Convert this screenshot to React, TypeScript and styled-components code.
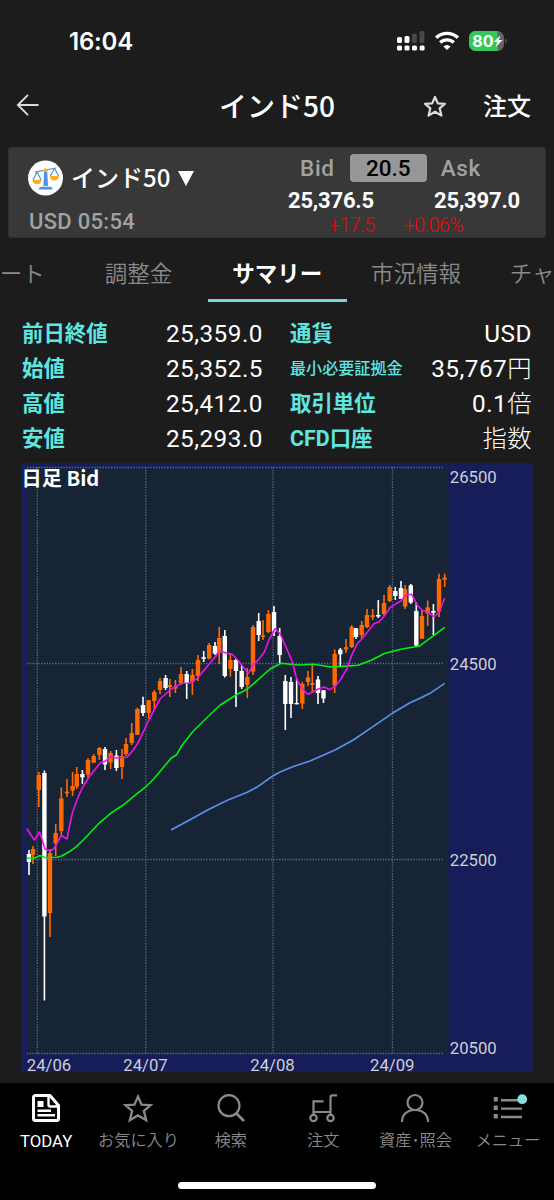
import React from 'react';
import styled, {createGlobalStyle} from 'styled-components';

const Colors = {
    Page: '#1c1c1c',
    Panel: '#383838',
    Grey: '#a2a2a2',
    Dim: '#8a8a8a',
    Cyan: '#5ee6e0',
    Teal: '#80d3d5',
    Red: '#f00505',
    Navy: '#161d58',
    Plot: '#172436',
    Grid: '#5c6688',
    Orange: '#ff6a00',
};

const GlobalStyle = createGlobalStyle`
    * {
        box-sizing: border-box;
    }

    body {
        margin: 0;
        background: ${Colors.Page};
        color: #fff;
        font-family: Roboto, 'Noto Sans CJK JP', sans-serif;
    }
`;

const Screen = styled.div`
    width: 554px;
    height: 1200px;
    overflow: hidden;
    display: flex;
    flex-direction: column;
    background: ${Colors.Page};
    white-space: nowrap;
`;

const StatusBar = styled.div`
    height: 82px;
    padding: 0 46px 0 69px;
    display: flex;
    align-items: center;
    justify-content: space-between;
`;

const Clock = styled.div`
    font-family: Inter, sans-serif;
    font-size: 24px;
    font-weight: 600;
    letter-spacing: -0.2px;
`;

const StatusIcons = styled.svg`
    width: 111px;
    height: 20px;
    display: block;
`;

const Header = styled.header`
    height: 65px;
    padding: 0 23px 19px 17px;
    display: grid;
    grid-template-columns: 1fr auto 1fr;
    align-items: center;
`;

const Title = styled.h1`
    margin: 0;
    font: 500 28px/40px 'Noto Sans CJK JP', sans-serif;
    position: relative;
    left: 3px;
`;

const HeaderActions = styled.div`
    display: flex;
    align-items: center;
    justify-content: flex-end;
    gap: 37px;

    svg {
        margin-top: 2px;
    }
`;

const OrderButton = styled.button`
    padding: 0;
    border: none;
    background: none;
    color: #fff;
    font: 500 24px/30px 'Noto Sans CJK JP', sans-serif;
`;

const Icon = styled.svg`
    display: block;
    fill: none;
    stroke: currentColor;
    overflow: visible;
`;

const Quote = styled.section`
    height: 91px;
    margin: 0 8px;
    display: flex;
    background: ${Colors.Panel};
    border: 1px solid #303030;
    border-radius: 3px;
`;

const Instrument = styled.div`
    width: 271px;
    padding: 12px 0 0 19px;
`;

const InstrumentName = styled.div`
    height: 36px;
    display: flex;
    align-items: center;
    font: 500 24px/34px 'Noto Sans CJK JP', sans-serif;

    span {
        margin: -2px 8px 0 8px;
    }
`;

const Session = styled.div`
    margin-top: 12px;
    padding-left: 1px;
    color: ${Colors.Grey};
    font-size: 22px;
    font-weight: 500;
    line-height: 28px;
    letter-spacing: 0.3px;
`;

const Prices = styled.div`
    flex: 1;
    padding: 6px 25px 0 8px;
`;

const PriceHead = styled.div`
    display: flex;
    align-items: center;
    padding-left: 12px;
    color: ${Colors.Grey};
    font-size: 22.5px;
    font-weight: 500;
    line-height: 28px;
    letter-spacing: 0.7px;
`;

const Spread = styled.div`
    width: 77px;
    height: 28px;
    margin: 0 14px 0 15px;
    border-radius: 4px;
    background: #979797;
    color: #000;
    text-align: center;
    letter-spacing: 0;
`;

const PriceRow = styled.div`
    display: flex;
    justify-content: space-between;
    margin-top: 5px;
    font-size: 22px;
    font-weight: 700;
    line-height: 28px;
    letter-spacing: -0.2px;
`;

const ChangeRow = styled.div`
    display: flex;
    gap: 29px;
    padding-left: 41px;
    margin-top: -1px;
    color: ${Colors.Red};
    font-size: 19.5px;
    font-weight: 300;
    line-height: 23px;
    letter-spacing: -0.5px;
`;

const Tabs = styled.nav`
    display: flex;
    height: 64px;
    margin-left: -69.5px;
`;

const Tab = styled.div<{$active?: boolean}>`
    flex: 0 0 138.7px;
    height: 64px;
    padding-top: 18px;
    border-bottom: 3px solid ${({$active}) => ($active ? Colors.Teal : 'transparent')};
    color: ${({$active}) => ($active ? '#fff' : Colors.Dim)};
    font: ${({$active}) => ($active ? 700 : 350)} 22.5px/33px 'Noto Sans CJK JP', sans-serif;
    text-align: center;
`;

const Summary = styled.dl`
    margin: 13px 22px 0 22px;
    display: grid;
    grid-template-columns: 241px 242px;
    column-gap: 27px;
    grid-auto-rows: 35px;
`;

const Item = styled.div`
    display: flex;
    align-items: center;
    justify-content: space-between;
`;

const Label = styled.dt<{$small?: boolean}>`
    color: ${Colors.Cyan};
    font-family: Roboto, 'Noto Sans CJK JP', sans-serif;
    font-size: ${({$small}) => ($small ? 16.1 : 21.4)}px;
    font-weight: ${({$small}) => ($small ? 500 : 700)};
    line-height: 37px;
    height: 35px;
`;

const Value = styled.dd`
    margin: 0;
    height: 35px;
    font: 400 24.3px/37px Roboto, sans-serif;
    letter-spacing: 0.5px;
`;

const Unit = styled.span`
    font-family: 'Noto Sans CJK JP', sans-serif;
    font-weight: 300;
    line-height: 0;
`;

const ChartSvg = styled.svg`
    flex: none;
    display: block;
    width: 512px;
    height: 609px;
    margin: 8px 0 0 21px;
`;

const TabBar = styled.footer`
    flex: 1;
    margin-top: 11px;
    display: flex;
    flex-direction: column;
    align-items: center;
    justify-content: space-between;
    background: #000;
    padding-bottom: 11px;
`;

const TabBarItems = styled.div`
    width: 100%;
    display: grid;
    grid-template-columns: repeat(6, 1fr);
`;

const TabBarItem = styled.div<{$active?: boolean}>`
    padding-top: 11px;
    display: flex;
    flex-direction: column;
    align-items: center;
    color: ${({$active}) => ($active ? '#fff' : '#8a8a8a')};
    font-family: Roboto, 'Noto Sans CJK JP', sans-serif;
    font-size: ${({$active}) => ($active ? 16.8 : 16.2)}px;
    font-weight: ${({$active}) => ($active ? 400 : 350)};
    line-height: 24px;

    svg {
        margin-bottom: 7px;
    }
`;

const HomeIndicator = styled.div`
    width: 198px;
    height: 7px;
    border-radius: 4px;
    background: #fff;
`;

const summary = [
    {label: '前日終値', value: '25,359.0'},
    {label: '通貨', value: 'USD'},
    {label: '始値', value: '25,352.5'},
    {label: '最小必要証拠金', value: '35,767', unit: '円', small: true},
    {label: '高値', value: '25,412.0'},
    {label: '取引単位', value: '0.1', unit: '倍'},
    {label: '安値', value: '25,293.0'},
    {label: 'CFD口座', value: '', unit: '指数'},
];

// x, high, body top, body bottom, low, rising
const candles = [
    [29, 850, 854, 862, 875, 0], [33, 846, 849, 855, 864, 1], [38.8, 772, 775, 790, 807, 1],
    [44.4, 770.5, 773, 916.5, 1000.5, 0], [50, 849, 853, 913, 937, 1], [55.7, 824, 833, 843.5, 856, 1],
    [61.3, 787.5, 798.5, 831, 835, 1], [67, 779, 791.7, 793.3, 797, 1], [72.6, 772, 786, 790.5, 796, 1],
    [76.8, 767, 774, 786.5, 789, 1], [82.4, 770, 774, 777.3, 784, 0], [88, 758, 760, 774.5, 779, 1],
    [93.7, 754, 756, 762.7, 762.7, 1], [99.4, 747, 748, 755, 760, 1], [105, 747, 749, 764.5, 770, 0],
    [110.6, 751, 753, 762.5, 769, 1], [116.4, 750, 755.5, 768, 771, 0], [122, 749, 756, 767, 779, 1],
    [126, 738, 744, 754, 756, 1], [131.7, 723, 733, 743, 745, 1], [137.4, 707.7, 709, 734.8, 735, 1],
    [143, 696.7, 705, 713, 716, 0], [148.7, 700, 700.3, 713, 719, 1], [154.3, 690, 692, 701, 710, 1],
    [160, 678, 681, 690, 694, 1], [165.6, 675, 678, 688, 690, 0], [169.8, 679, 685, 687, 697, 1],
    [175.4, 680, 686.5, 688.5, 693, 1], [181, 667, 674, 683, 685, 1], [186.7, 671, 674, 683, 699, 0],
    [192.4, 669, 675, 682, 695, 1], [198, 655, 660, 676, 681, 1], [203.7, 651, 657.2, 658.8, 662, 0],
    [209.2, 643, 645, 658.5, 659.5, 1], [215, 642, 646, 653.5, 655, 0], [219.2, 627, 638, 653, 664, 1],
    [224.8, 630, 636, 676, 677.5, 0], [230.4, 653, 660, 669, 676.5, 1], [236, 659, 660, 671, 707, 0],
    [241.7, 665, 671, 687, 689, 0], [247.3, 668, 677, 685, 698, 1], [253, 625, 627, 671.5, 675, 1],
    [258.7, 613, 621, 635, 641, 0], [263, 620, 635.5, 637, 640, 1], [268.4, 610, 614, 632, 633, 1],
    [274, 606, 612, 631.5, 636, 0], [279.7, 628, 636, 655, 663, 0], [285.3, 675, 681, 704, 730, 0],
    [291, 677, 682, 704, 718, 0], [296.7, 679, 703, 704.3, 704.3, 0], [302.3, 682, 684, 703.5, 709, 1],
    [308, 671, 677.3, 682, 686, 1], [312.3, 665, 683, 684.8, 692, 1], [318, 676, 679.5, 693, 704, 0],
    [323.5, 690, 690.3, 698.5, 703, 0], [334.7, 649.5, 654, 685.5, 693, 1], [340.3, 648, 649.7, 654.3, 667, 0],
    [346, 639, 647.2, 649.5, 653, 1], [351.7, 625, 627, 647, 648, 1], [356, 628, 628.3, 637, 639, 0],
    [361.7, 621, 625, 635, 638, 1], [367, 609, 615, 627, 628, 1], [372.7, 609, 615.3, 617, 620, 1],
    [378.3, 600, 615, 616.5, 618, 0], [384, 595, 603, 614, 616, 1], [389.7, 585, 587, 601, 602, 1],
    [395.3, 587, 591, 596, 600, 0], [401, 581, 588, 599, 599, 0], [405.1, 585, 589, 606.5, 609, 1],
    [410.8, 584, 585.3, 602.5, 604, 0], [416.3, 602, 611, 645.5, 646.5, 0], [422, 610, 616, 638.7, 639, 1],
    [427.7, 600.5, 607.3, 613.5, 626, 1], [433.4, 604, 611, 612.7, 635, 0], [439, 573.7, 579, 611.5, 617, 1],
    [444.7, 573.7, 577.7, 579.7, 587, 1],
];

const shortAverage = '26.7,828.5 34.3,840 39.7,832 45,849 50,851 53.7,849 61.3,835.5 67,839 69.5,826 72.7,811.7 78.3,796.7 83.3,786 89,777.3 100.3,762.7 105,761.3 110.7,756.7 116.7,758 127,757.2 133.3,750 138.3,742.3 149.3,719 160,699 171.3,689 181.7,683.3 190,683 197.3,678.3 220.3,650.7 226.7,653.3 232,654 238.3,660.7 248.3,673.3 254,664 259,659 264.3,652.3 269.3,639.3 275,628.7 280.3,634 292.3,661.7 297,680 302.7,689.3 308,694.3 313.3,691.7 318.3,689 324.3,687 329.7,689.7 335,686.3 340.3,680 346.7,669 351.7,655.3 357,644 363.3,637.3 374,623.7 379.3,621.7 384.3,616 390,607.7 396.7,603.3 401,601 406,595 411.7,594.3 417.3,605.3 422.3,610.3 427.7,612 434,616.7 439,612.3 444.7,598.3';
const middleAverage = '26.7,858.3 34,858.3 40,855.5 45,857.5 57,857.3 61.7,856 70,851.3 76,846.8 83.3,840 100,822.3 111.7,812.7 123.3,805 136.7,793.8 146,786.7 154.3,778.3 171,758.3 176.7,754.7 181.7,745.7 192.7,731.7 205,719.5 220.3,705 236,695 247.3,689 254,683.3 270,669 281,663.3 298.3,665 313.3,664.3 330,666.7 342,666.4 358.3,665.3 371.7,660 385,653.3 401.7,649 419,646.3 444.7,627.3';
const longAverage = '171,830 190,819.7 209,809.3 228,800 247.3,792.3 256.7,787.3 272.7,776 280,772 294,766.3 310,761 335,750 353.3,740 370,728.7 392.3,713.3 410,702.7 420,698.3 430,693.3 444.7,683.3';

const months = [
    {x: 37.3, label: '24/06', labelX: 26.8},
    {x: 145.8, label: '24/07', labelX: 123.3},
    {x: 273, label: '24/08', labelX: 250.3},
    {x: 392.5, label: '24/09', labelX: 370},
];

const levels = [
    {y: 467.5, label: '26500', labelY: 483},
    {y: 663.5, label: '24500', labelY: 669.5},
    {y: 859.5, label: '22500', labelY: 865.5},
    {y: 1053.5, label: '20500', labelY: 1054},
];

const Chart = () => (
    <ChartSvg viewBox="21 463 512 609">
        <rect x="21" y="463" width="512" height="609" fill={Colors.Navy} />
        <rect x="27" y="467" width="421.5" height="587" fill={Colors.Plot} />
        <g stroke={Colors.Grid} strokeWidth="1.3" strokeDasharray="1.4 1.4">
            {months.map(m => <line key={m.label} x1={m.x} x2={m.x} y1="467" y2="1054" />)}
            {levels.map(l => <line key={l.label} x1="27" x2="443" y1={l.y} y2={l.y} />)}
        </g>
        {candles.map(([x, high, top, bottom, low, rising]) => (
            <g key={x} fill={rising ? Colors.Orange : '#fff'}>
                <rect x={x - 0.8} y={high} width="1.6" height={low - high} />
                <rect x={x - 2.2} y={top} width="4.4" height={bottom - top} />
            </g>
        ))}
        <g fill="none" strokeWidth="1.6" strokeLinejoin="round">
            <polyline points={longAverage} stroke="#5e90ea" />
            <polyline points={middleAverage} stroke="#00f010" />
            <polyline points={shortAverage} stroke="#f010ee" />
        </g>
        <g fill="#cfcfcf" fontFamily="Roboto" fontSize="16.7">
            {months.map(m => <text key={m.label} x={m.labelX} y="1070.5">{m.label}</text>)}
            {levels.map(l => <text key={l.label} x="449.8" y={l.labelY}>{l.label}</text>)}
        </g>
        <text x="21.5" y="485.5" fill="#fff" fontFamily="Noto Sans CJK JP" fontWeight="700" fontSize="20.2">日足 Bid</text>
    </ChartSvg>
);

const Scales = () => (
    <Icon width="35" height="36" viewBox="0 0 35 36" strokeWidth="1.2">
        <circle cx="17.5" cy="18" r="17.5" fill="#fff" stroke="none" />
        <path d="M7 12.2 28 8M9 12 5 20M9 12l4.2 8M26.5 8.3 22.4 16M26.5 8.3l4 7.7" stroke="#4b93e8" />
        <path d="M16.2 11h3l.8 15h-4.6zM11 29.5q0-2.7 2.8-2.7h8q2.7 0 2.7 2.7z" fill="#4b93e8" stroke="none" />
        <path d="M4.3 19.7h9.4q-.8 4.6-4.7 4.6t-4.7-4.6zM21.7 16H31q-.8 4.6-4.6 4.6T21.7 16z" fill="#ffae1e" stroke="none" />
        <circle cx="17.7" cy="10.2" r="1.9" fill="#ffae1e" stroke="none" />
    </Icon>
);

const starPath = 'M14 2.5 17.6 10.6 26.6 11.2 19.9 17 22.2 26.2 14 21.4 5.8 26.2 8.1 17 1.4 11.2 10.4 10.6z';

const App = () => (
    <Screen>
        <GlobalStyle />
        <StatusBar>
            <Clock>16:04</Clock>
            <StatusIcons viewBox="0 0 111 20">
                <g fill="#fff">
                    <rect x="0" y="6" width="5" height="6" rx="1.6" />
                    <rect x="7.5" y="5" width="5" height="7" rx="1.6" />
                    <rect x="15" y="2.5" width="4.8" height="9.5" rx="1.6" fill="#484848" />
                    <rect x="22.6" y="0" width="4.8" height="12" rx="1.6" fill="#484848" />
                    {[0, 7.5, 15, 22.6].map(x => <rect key={x} x={x} y="14.5" width="5" height="5" rx="1.5" />)}
                </g>
                <g fill="none" stroke="#fff" strokeWidth="3.4">
                    <path d="M39.1 6.8a15.6 15.6 0 0 1 21.8 0" />
                    <path d="M43.2 11.6a9.9 9.9 0 0 1 13.6 0" />
                </g>
                <path d="M46.4 15.5a5.4 5.4 0 0 1 7.2 0L50 19z" fill="#fff" />
                <clipPath id="charge"><rect x="72" y="0" width="35" height="20" rx="6.5" /></clipPath>
                <g clipPath="url(#charge)">
                    <rect x="72" y="0" width="35" height="20" fill="#656565" />
                    <rect x="72" y="0" width="28.5" height="20" fill="#34c759" />
                </g>
                <path d="M108.4 7q2.6 3 0 6z" fill="#656565" />
                <text x="75.3" y="15.8" fill="#fff" fontFamily="Inter" fontWeight="700" fontSize="16">80</text>
                <path d="M103.5 4.3 96.6 11h3.8l-1.7 5.2 6.8-7.1h-3.8z" fill="#fff" />
            </StatusIcons>
        </StatusBar>
        <Header>
            <Icon width="22" height="22" viewBox="0 0 22 22" strokeWidth="1.9">
                <path d="M21.5 11H1M11 .8.9 11 11 21.2" stroke="#dcdcdc" />
            </Icon>
            <Title>インド50</Title>
            <HeaderActions>
                <Icon width="22" height="22" viewBox="0 0 28 28" strokeWidth="2.8"><path d={starPath} stroke="#dcdcdc" strokeLinejoin="round" /></Icon>
                <OrderButton>注文</OrderButton>
            </HeaderActions>
        </Header>
        <Quote>
            <Instrument>
                <InstrumentName>
                    <Scales />
                    <span>インド50</span>
                    <svg width="16" height="15" viewBox="0 0 16 15"><path d="M0 0h16L8 15z" fill="#fff" /></svg>
                </InstrumentName>
                <Session>USD 05:54</Session>
            </Instrument>
            <Prices>
                <PriceHead>
                    Bid
                    <Spread>20.5</Spread>
                    Ask
                </PriceHead>
                <PriceRow>
                    <span>25,376.5</span>
                    <span>25,397.0</span>
                </PriceRow>
                <ChangeRow>
                    <span>+17.5</span>
                    <span>+0.06%</span>
                </ChangeRow>
            </Prices>
        </Quote>
        <Tabs>
            <Tab>チャート</Tab>
            <Tab>調整金</Tab>
            <Tab $active>サマリー</Tab>
            <Tab>市況情報</Tab>
            <Tab>チャート</Tab>
        </Tabs>
        <Summary>
            {summary.map(({label, value, unit, small}) => (
                <Item key={label}>
                    <Label $small={small}>{label}</Label>
                    <Value>{value}{unit && <Unit>{unit}</Unit>}</Value>
                </Item>
            ))}
        </Summary>
        <Chart />
        <TabBar>
            <TabBarItems>
                <TabBarItem $active>
                    <Icon width="28" height="28" viewBox="0 0 28 28" strokeWidth="3">
                        <path d="M1.5 3.5q0-2 2-2H18l8.5 10v13q0 2-2 2h-21q-2 0-2-2z" strokeLinejoin="round" />
                        <path d="M16.5 2v8.5q0 2 2 2H26" strokeWidth="2.4" />
                        <path d="M5.5 7h6v6h-6z" fill="currentColor" stroke="none" />
                        <path d="M5.5 16.8H19M5.5 21.3h17.5" strokeWidth="2.4" />
                    </Icon>
                    TODAY
                </TabBarItem>
                <TabBarItem>
                    <Icon width="28" height="28" viewBox="0 0 28 28" strokeWidth="2.3"><path d={starPath} /></Icon>
                    お気に入り
                </TabBarItem>
                <TabBarItem>
                    <Icon width="28" height="28" viewBox="0 0 28 28" strokeWidth="2.2">
                        <circle cx="12" cy="11.7" r="10.5" />
                        <path d="M19 19l8 8" strokeWidth="2.7" />
                    </Icon>
                    検索
                </TabBarItem>
                <TabBarItem>
                    <Icon width="28" height="28" viewBox="0 0 28 28" strokeWidth="2.2">
                        <circle cx="4.5" cy="24" r="3.2" />
                        <circle cx="21.5" cy="24" r="3.2" />
                        <path d="M4.5 20.5V7.3h10M4.5 18h17M21.5 20.5v-17q0-2.2 2.2-2.2H28" />
                    </Icon>
                    注文
                </TabBarItem>
                <TabBarItem>
                    <Icon width="28" height="28" viewBox="0 0 28 28" strokeWidth="2.2">
                        <circle cx="14" cy="8.5" r="7.5" />
                        <path d="M1 28c0-7.5 5.2-12 13-12s13 4.5 13 12" />
                    </Icon>
                    資産･照会
                </TabBarItem>
                <TabBarItem>
                    <Icon width="28" height="28" viewBox="0 0 28 28">
                        <path d="M-.2 5.3h4M-.2 13.8h4M-.2 22.3h4" strokeWidth="4.6" />
                        <path d="M7 6.2h21M7 14.6h21M7 23h21" strokeWidth="2.4" />
                        <circle cx="28.2" cy="5.2" r="4.9" fill="#86dede" stroke="none" />
                    </Icon>
                    メニュー
                </TabBarItem>
            </TabBarItems>
            <HomeIndicator />
        </TabBar>
    </Screen>
);

export default App;
